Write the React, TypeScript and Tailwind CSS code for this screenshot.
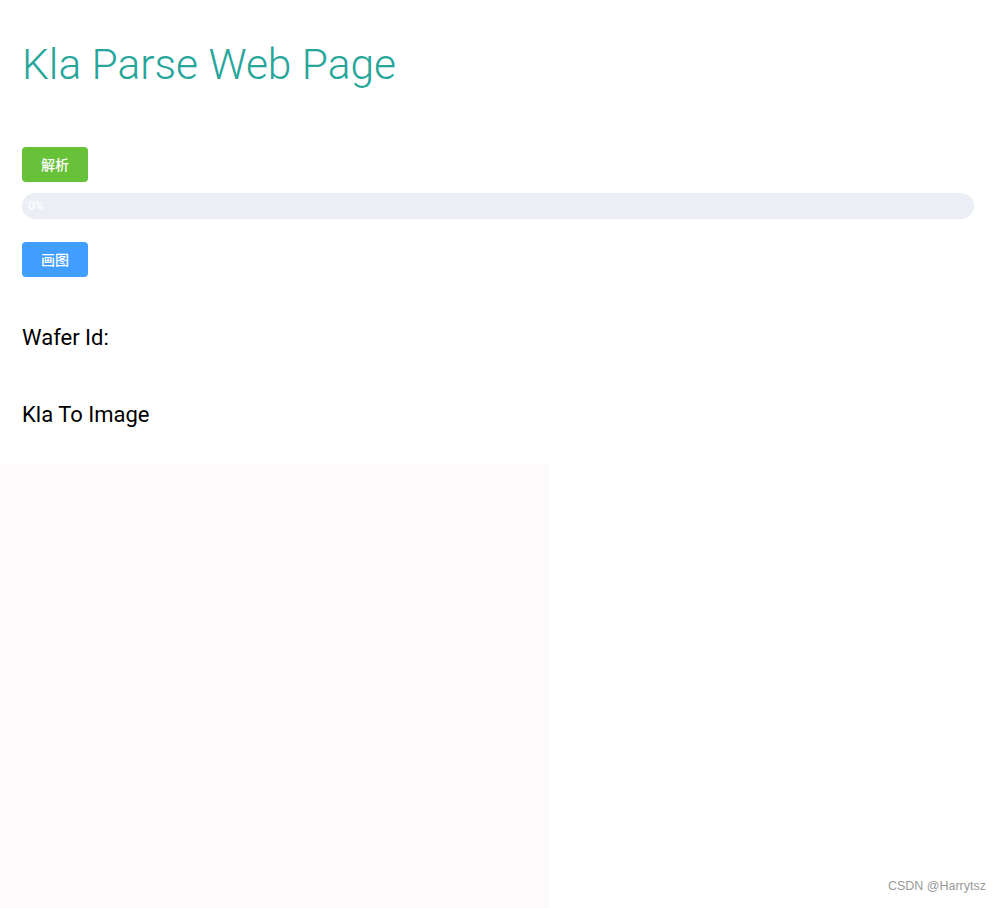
export default function App() {
  return (
    <div className="relative h-[908px] w-[1001px] overflow-hidden bg-white font-['Roboto',sans-serif]">
      <div className="px-[22px]">
        <h1 className="pt-[35px] text-[42.5px] font-light leading-[60px] text-[#26a69a]">
          Kla Parse Web Page
        </h1>
        <div className="mt-[52px]">
          <button className="h-[35px] w-[66px] rounded-[4px] bg-[#67c23a] text-[14px] font-medium text-white font-['Noto_Sans_CJK_SC',sans-serif]">
            解析
          </button>
        </div>
        <div className="mt-[11px] flex h-[26px] w-[952px] items-center rounded-full bg-[#ebeef5] pl-[6px]">
          <span className="text-[12px] font-medium text-white">0%</span>
        </div>
        <div className="mt-[23px]">
          <button className="h-[35px] w-[66px] rounded-[4px] bg-[#409eff] text-[14px] font-medium text-white font-['Noto_Sans_CJK_SC',sans-serif]">
            画图
          </button>
        </div>
        <p className="mt-[46px] text-[22px] leading-[30px] text-black">Wafer Id:</p>
        <p className="mt-[47px] text-[22px] leading-[30px] text-black">Kla To Image</p>
      </div>
      <div className="mt-[34px] h-[444px] w-[549px] bg-[#fcfafa]" />
      <div className="absolute bottom-[12px] right-[15px] font-['Liberation_Sans',sans-serif] text-[12.5px] text-[#999]">
        CSDN @Harrytsz
      </div>
    </div>
  );
}
